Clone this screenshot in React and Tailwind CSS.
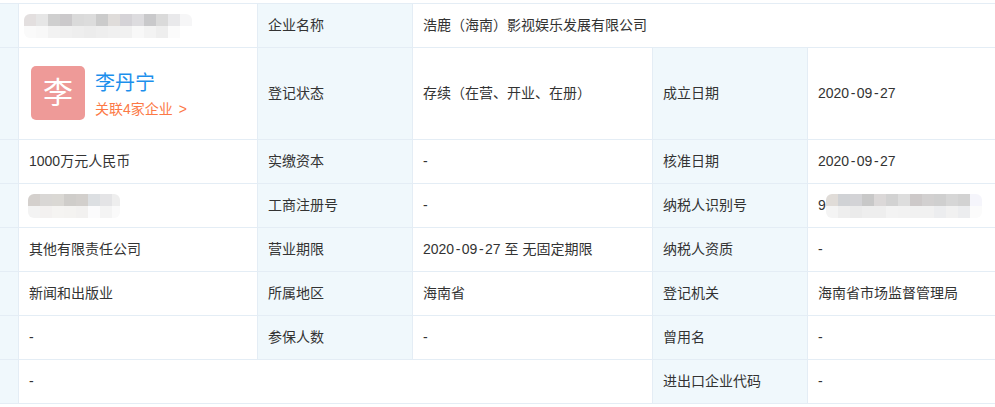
import React from 'react';

const font = { fontFamily: '"Liberation Sans", "Noto Sans CJK SC", sans-serif' };

function Mosaic({ top, bottom, className = '' }) {
  return (
    <div className={`inline-flex flex-col overflow-hidden rounded-md ${className}`}>
      <div className="flex">
        {top.map((c, i) => <div key={i} className="w-3 h-3 shrink-0" style={{ background: c }} />)}
      </div>
      <div className="flex">
        {bottom.map((c, i) => <div key={i} className="w-3 h-3 shrink-0" style={{ background: c }} />)}
      </div>
    </div>
  );
}

function Label({ children }) {
  return <div className="bg-[#f0f8fc] border-r border-b border-[#e4edf5] flex items-center pl-[10px] pb-[1px]">{children}</div>;
}

function Value({ children, className = '' }) {
  return <div className={`border-r border-b border-[#e4edf5] flex items-center pl-[10px] pb-[1px] whitespace-pre ${className}`}>{children}</div>;
}

function Edge() {
  return <div className="bg-[#f0f8fc] border-r border-b border-[#e4edf5]" />;
}

// the hyphens in the dates sit wider than Liberation's
function DateText() {
  return <>2020<span className="mx-[1.5px]">-</span>09<span className="mx-[1.5px]">-</span>27</>;
}

export default function App() {
  return (
    <div className="w-[995px] h-[407px] overflow-hidden bg-white pt-[3px] text-[14px] text-[#333]" style={font}>
      <div className="w-[1000px] border-t border-[#e4edf5] grid grid-cols-[19px_239px_155px_240px_155px_192px] grid-rows-[44px_92px_44px_44px_44px_44px_44px_44px]">
        <Edge />
        <Value>
          <Mosaic
            className="-ml-[5px] mt-[1px]"
            top={['#e3dfdf', '#e6e6e6', '#cfcfcf', '#cbc9cb', '#dadada', '#dcdcdc', '#cbcbcb', '#dfdcda', '#d5d3d7', '#dddcdf', '#c9c9cb', '#dadada', '#e9e9eb', '#f6f6f7']}
            bottom={['#fafafa', '#f8f8f8', '#f2f2f2', '#f0f0f0', '#eeeeee', '#ececec', '#eeeeee', '#f0f0f0', '#f1f1f1', '#f8f8f8', '#f3f3f3', '#eeeeee', '#fbfbfb', '#ffffff']}
          />
        </Value>
        <Label>企业名称</Label>
        <div className="col-span-3 border-b border-[#e4edf5] flex items-center pl-[10px] pb-[1px]">浩鹿（海南）影视娱乐发展有限公司</div>

        <Edge />
        <div className="border-r border-b border-[#e4edf5] flex items-center pl-[12px] pb-[2px] gap-[10px]">
          <div className="w-[54px] h-[54px] rounded-[5px] bg-[#ee9a98] text-white text-[30px] flex items-center justify-center">李</div>
          <div className="flex flex-col gap-[3px] pt-[4px]">
            <div className="text-[20px] leading-[26px] text-[#1c8fec]">李丹宁</div>
            <div className="leading-[20px] text-[#fc7946]">关联4家企业<span className="ml-[6px]">&gt;</span></div>
          </div>
        </div>
        <Label>登记状态</Label>
        <Value>存续（在营、开业、在册）</Value>
        <Label>成立日期</Label>
        <Value><DateText /></Value>

        <Edge />
        <Value>1000万元人民币</Value>
        <Label>实缴资本</Label>
        <Value>-</Value>
        <Label>核准日期</Label>
        <Value><DateText /></Value>

        <Edge />
        <Value>
          <Mosaic
            className="-ml-[1px] w-[92px] mt-[1px]"
            top={['#d4d0cd', '#d9d7d5', '#dad8d4', '#cfcdca', '#d2cfcc', '#dcdfe2', '#e4e4e6', '#eeeeee']}
            bottom={['#f3f3f3', '#f3f1f0', '#f5f4f2', '#f4f3f1', '#f2f1f0', '#fbfbfc', '#f4f4f4', '#fafafa']}
          />
        </Value>
        <Label>工商注册号</Label>
        <Value>-</Value>
        <Label>纳税人识别号</Label>
        <Value>
          9
          <Mosaic
            className="mt-[1px]"
            top={['#e0dcd8', '#d0d2d5', '#d3d3d6', '#c8c8c8', '#dbd8d8', '#d2d2d2', '#dddddd', '#cdc9c9', '#d2d0d0', '#cfcfcf', '#d6d6d6', '#d2d2d2', '#f5f5fb']}
            bottom={['#f4f4f4', '#eeeeee', '#ebebeb', '#eeeeee', '#eeeeee', '#f3f3f3', '#f2f2f2', '#f1f1f1', '#f1f1f1', '#ecedef', '#f1f1f1', '#ecedef', '#fbfbfb']}
          />
        </Value>

        <Edge />
        <Value>其他有限责任公司</Value>
        <Label>营业期限</Label>
        <Value><DateText /> 至 无固定期限</Value>
        <Label>纳税人资质</Label>
        <Value>-</Value>

        <Edge />
        <Value>新闻和出版业</Value>
        <Label>所属地区</Label>
        <Value>海南省</Value>
        <Label>登记机关</Label>
        <Value>海南省市场监督管理局</Value>

        <Edge />
        <Value>-</Value>
        <Label>参保人数</Label>
        <Value>-</Value>
        <Label>曾用名</Label>
        <Value>-</Value>

        <Edge />
        <div className="col-span-3 border-r border-b border-[#e4edf5] flex items-center pl-[10px] pb-[1px]">-</div>
        <Label>进出口企业代码</Label>
        <Value>-</Value>
      </div>
    </div>
  );
}
